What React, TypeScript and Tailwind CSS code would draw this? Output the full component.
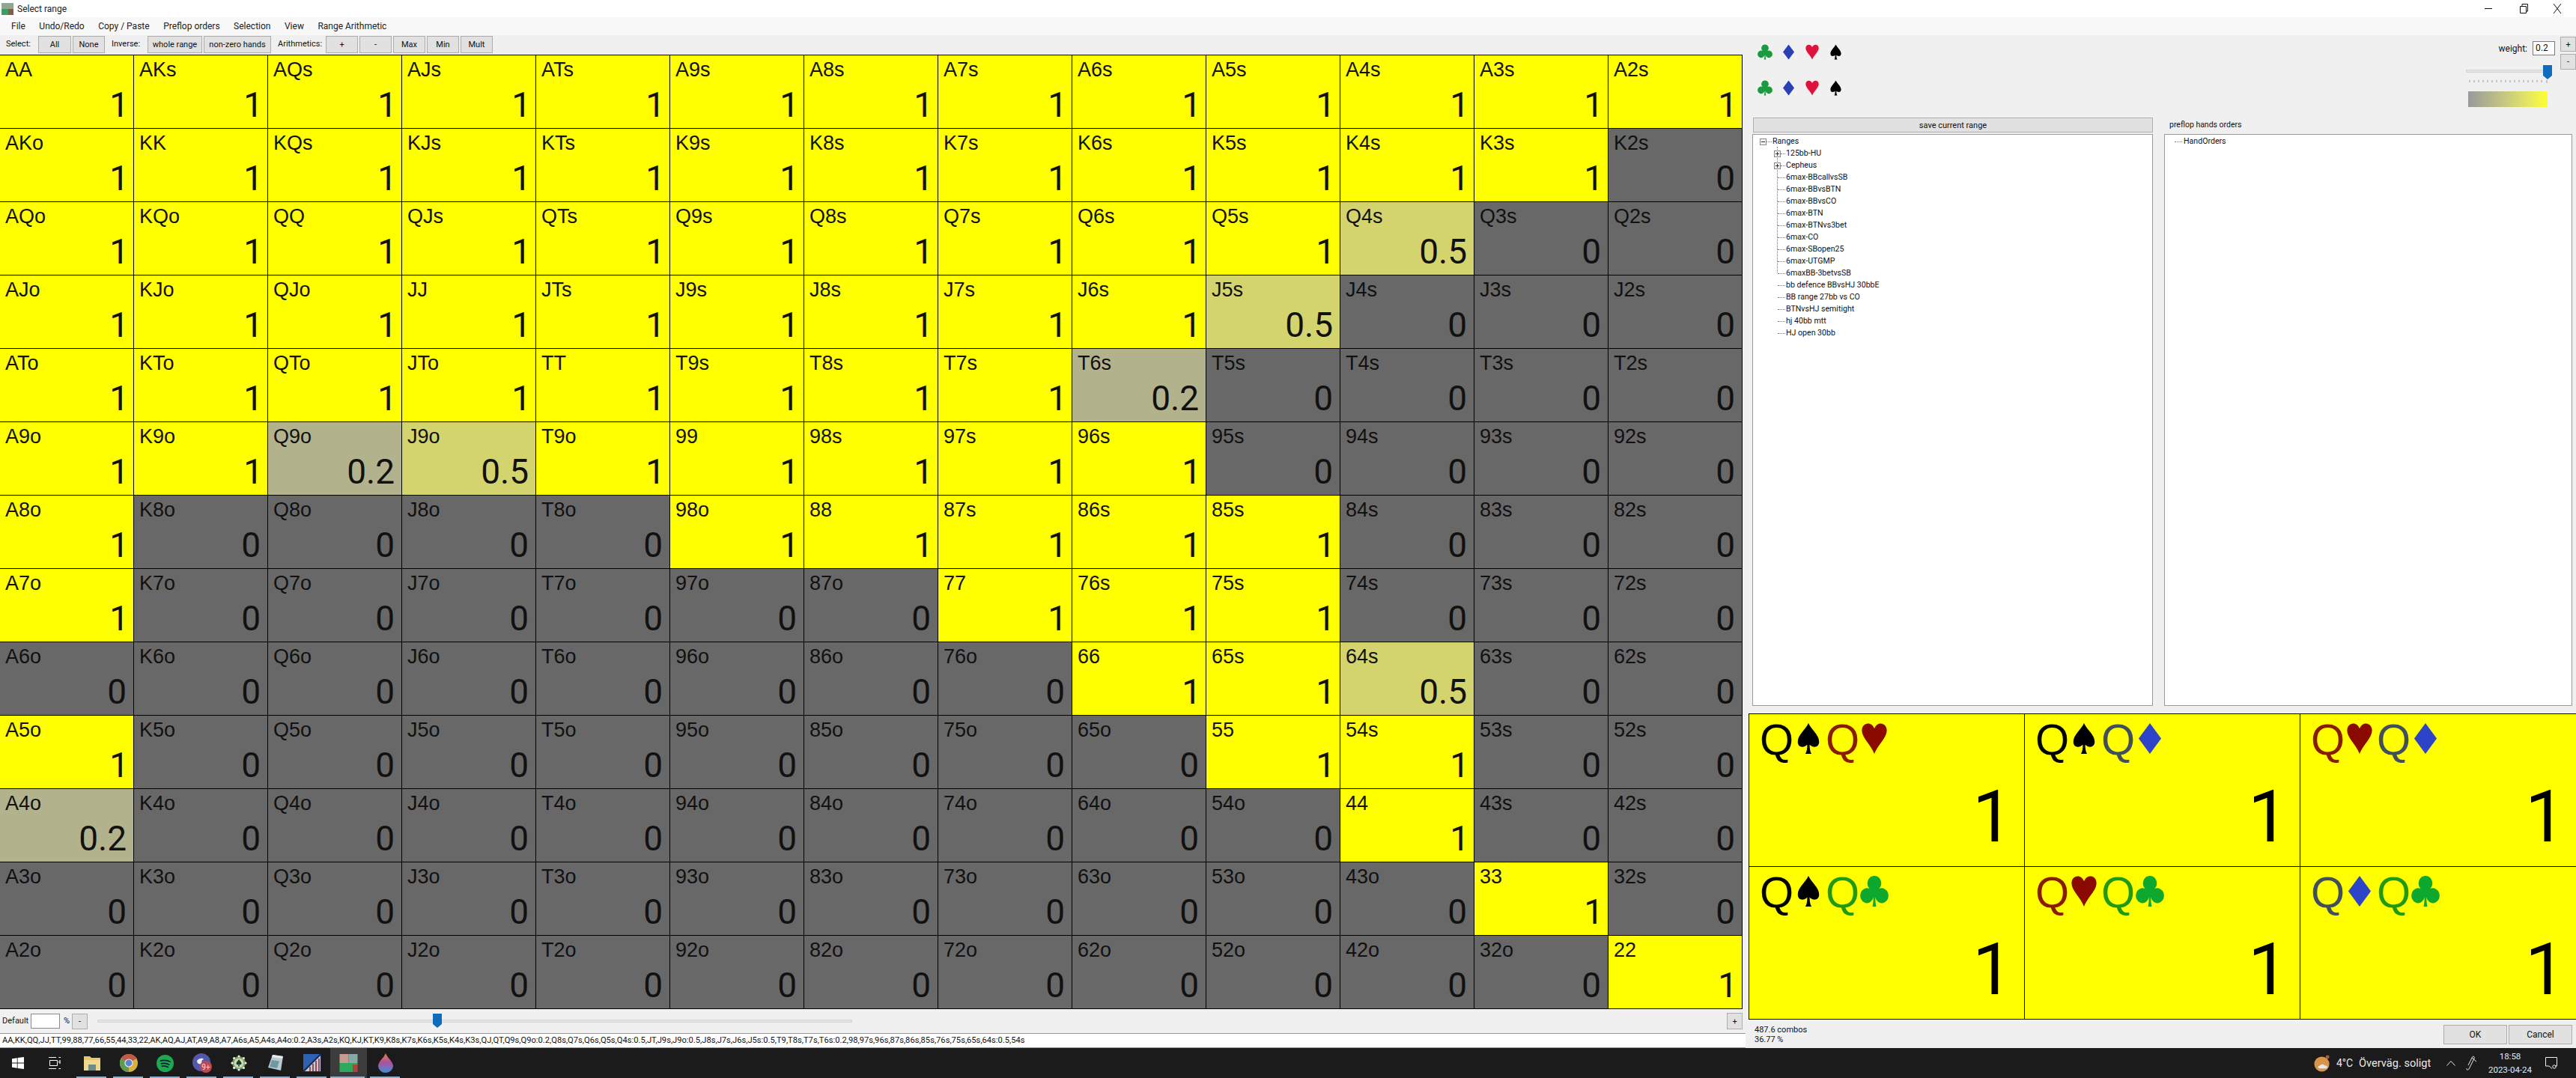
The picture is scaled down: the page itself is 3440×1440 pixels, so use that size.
import React from "react";

const ranks = "AKQJT98765432".split("");
const values = [
  "1111111111111",
  "1111111111110",
  "1111111111b00",
  "111111111b000",
  "11111111a0000",
  "11ab111110000",
  "1000011111000",
  "1000000111000",
  "0000000011b00",
  "1000000001100",
  "a000000000100",
  "0000000000010",
  "0000000000001",
];
const cellStyle: Record<string, { bg: string; text: string; pad: string }> = {
  "1": { bg: "bg-[#ffff00]", text: "1", pad: "pr-[6px]" },
  "0": { bg: "bg-[#686868]", text: "0", pad: "pr-[9px]" },
  a: { bg: "bg-[#b2b28c]", text: "0.2", pad: "pr-[9px]" },
  b: { bg: "bg-[#d4d46e]", text: "0.5", pad: "pr-[9px]" },
};

const SANS = "font-['Liberation_Sans',Arial,sans-serif]";

type Suit = "s" | "h" | "d" | "c";
function SuitIcon({ suit, className }: { suit: Suit; className: string }) {
  return (
    <svg viewBox="0 0 24 24" preserveAspectRatio="none" className={className} fill="currentColor">
      {suit === "s" && (
        <path d="M12 0.5C9.5 5.5 3 9 3 14.5C3 18.2 7.4 19.6 11 16.6C11 19.5 10.6 22 9.4 23.5L14.6 23.5C13.4 22 13 19.5 13 16.6C16.6 19.6 21 18.2 21 14.5C21 9 14.5 5.5 12 0.5Z" />
      )}
      {suit === "h" && (
        <path d="M12 23.5C9 16.5 1.5 11.5 1.5 6C1.5 2.8 3.9 0.8 6.6 0.8C9 0.8 11 2.3 12 4.6C13 2.3 15 0.8 17.4 0.8C20.1 0.8 22.5 2.8 22.5 6C22.5 11.5 15 16.5 12 23.5Z" />
      )}
      {suit === "d" && <path d="M12 0.5L21.5 12L12 23.5L2.5 12Z" />}
      {suit === "c" && (
        <path d="M12 0.5A5.6 5.6 0 0 1 16 10.2A5.6 5.6 0 1 1 12.8 16.5C12.9 19.4 13 21.5 13.6 23.5L10.4 23.5C11 21.5 11.1 19.4 11.2 16.5A5.6 5.6 0 1 1 8 10.2A5.6 5.6 0 0 1 12 0.5Z" />
      )}
    </svg>
  );
}

function SuitRow() {
  return (
    <div className="flex gap-[12px]">
      <SuitIcon suit="c" className="w-[20px] h-[21px] text-[#1c9a40]" />
      <SuitIcon suit="d" className="w-[19px] h-[21px] text-[#2a40b4]" />
      <SuitIcon suit="h" className="w-[20px] h-[21px] text-[#e2103c]" />
      <SuitIcon suit="s" className="w-[19px] h-[21px] text-black" />
    </div>
  );
}

function Btn({ children, className }: { children: React.ReactNode; className: string }) {
  return (
    <div
      className={
        "flex items-center justify-center bg-[#e1e1e1] border border-[#adadad] text-[11px] leading-none text-[#111] " +
        className
      }
    >
      {children}
    </div>
  );
}

function Cell({ i, j }: { i: number; j: number }) {
  const label = i === j ? ranks[i] + ranks[j] : i < j ? ranks[i] + ranks[j] + "s" : ranks[j] + ranks[i] + "o";
  const s = cellStyle[values[i][j]];
  return (
    <div className={"flex flex-col justify-between border-r border-b border-black text-[#111] " + s.bg}>
      <div className={"pl-[7px] pt-[6px] text-[27px] leading-[27px] " + SANS}>{label}</div>
      <div className={"pb-[8px] text-right text-[46px] leading-[46px] font-[Roboto,sans-serif] " + s.pad}>{s.text}</div>
    </div>
  );
}

function HandPart({ suit, tone }: { suit: Suit; tone: string }) {
  return (
    <>
      <span className={"w-[46px] text-[58px] leading-[58px] " + tone}>Q</span>
      <SuitIcon
        suit={suit}
        className={
          "w-[38px] h-[43px] mt-[6px] mr-[4px] " +
          (suit === "s"
            ? "text-black"
            : suit === "h"
              ? "text-[#8a0a00]"
              : suit === "d"
                ? "text-[#2c44c8]"
                : "text-[#0fa82e]")
        }
      />
    </>
  );
}

const toneOf: Record<Suit, string> = {
  s: "text-black",
  h: "text-[#8a1a00]",
  d: "text-[#3f4f5f]",
  c: "text-[#1f9a14]",
};

function HandCell({ a, b, right }: { a: Suit; b: Suit; right: boolean }) {
  return (
    <div className={"flex flex-col justify-between bg-[#ffff00] border-black border-b " + (right ? "border-r" : "")}>
      <div className={"flex items-start pl-[14px] pt-[5px] " + SANS}>
        <HandPart suit={a} tone={toneOf[a]} />
        <HandPart suit={b} tone={toneOf[b]} />
      </div>
      <div className="pr-[15px] pb-[18px] text-right text-[96px] leading-[96px] text-black font-[Roboto,sans-serif]">
        1
      </div>
    </div>
  );
}

const trees = [
  "6max-BBcallvsSB",
  "6max-BBvsBTN",
  "6max-BBvsCO",
  "6max-BTN",
  "6max-BTNvs3bet",
  "6max-CO",
  "6max-SBopen25",
  "6max-UTGMP",
  "6maxBB-3betvsSB",
  "bb defence BBvsHJ 30bbE",
  "BB range 27bb vs CO",
  "BTNvsHJ semitight",
  "hj 40bb mtt",
  "HJ open 30bb",
];

function Expander({ open }: { open: boolean }) {
  return (
    <svg viewBox="0 0 9 9" className="w-[9px] h-[9px] shrink-0">
      <rect x="0.5" y="0.5" width="8" height="8" fill="#f2f2f2" stroke="#8a8a8a" />
      <path d={open ? "M2 4.5H7" : "M2 4.5H7M4.5 2V7"} stroke="#333" fill="none" />
    </svg>
  );
}

function Slot({ children, active }: { children?: React.ReactNode; active?: boolean }) {
  return (
    <div className={"relative w-[49px] h-[40px] flex items-center justify-center " + (active ? "bg-[#3c3c3c]" : "")}>
      {children}
      <div
        className={
          "absolute bottom-0 h-[2px] bg-[#8fb0c8] " + (active ? "left-0 right-[3px]" : "left-[4px] right-[5px]")
        }
      />
    </div>
  );
}

function AppIcon({ className }: { className: string }) {
  return (
    <svg viewBox="0 0 24 24" className={className}>
      <rect x="0" y="0" width="12" height="12" fill="#c69a90" />
      <rect x="12" y="0" width="12" height="12" fill="#86a9a6" />
      <rect x="0" y="12" width="18" height="12" fill="#2fa95b" />
      <rect x="18" y="14" width="6" height="10" fill="#b5403c" />
      <rect x="12" y="12" width="12" height="2" fill="#2fa95b" />
    </svg>
  );
}

export default function App() {
  return (
    <div className="w-[3440px] h-[1440px] flex flex-col overflow-hidden bg-[#f0f0f0] text-[#111] font-[Roboto,sans-serif]">
      {/* title bar */}
      <div className="h-[23px] bg-white flex items-center shrink-0">
        <svg viewBox="0 0 16 16" className="ml-[2px] w-[16px] h-[16px]">
          <rect width="16" height="8" fill="#93a593" />
          <rect y="8" width="9" height="8" fill="#3d9c5e" />
          <rect x="9" y="8" width="7" height="8" fill="#8a5a48" />
        </svg>
        <span className="ml-[5px] text-[12px] leading-none text-[#222]">Select range</span>
        <div className="ml-auto mr-[2px] flex items-center text-[#111]">
          <svg viewBox="0 0 46 23" className="w-[46px] h-[23px]">
            <path d="M18 11.5H28" stroke="#111" fill="none" />
          </svg>
          <svg viewBox="0 0 46 23" className="w-[46px] h-[23px]">
            <path d="M19.5 8.5H27.5V17.5H19.5ZM22 8V5.5H29.5V15H28" stroke="#111" fill="none" />
          </svg>
          <svg viewBox="0 0 46 23" className="w-[46px] h-[23px]">
            <path d="M18 5L28 18M28 5L18 18" stroke="#111" fill="none" />
          </svg>
        </div>
      </div>

      {/* menu */}
      <div className="h-[24px] bg-[#f8f8f8] flex items-center shrink-0 pl-[15px] gap-[18.5px] text-[12px] leading-none text-[#222]">
        <span>File</span>
        <span>Undo/Redo</span>
        <span>Copy / Paste</span>
        <span>Preflop orders</span>
        <span>Selection</span>
        <span>View</span>
        <span>Range Arithmetic</span>
      </div>

      <div className="flex-1 flex min-h-0">
        {/* left column */}
        <div className="w-[2331px] shrink-0 flex flex-col">
          <div className="h-[26px] flex items-start pl-[8px] pt-[1px] text-[11px]">
            <span className="w-[43px] leading-[22px]">Select:</span>
            <Btn className="w-[44px] h-[23px]">All</Btn>
            <Btn className="w-[43px] h-[23px] ml-[2px]">None</Btn>
            <span className="w-[48px] ml-[9px] leading-[22px]">Inverse:</span>
            <Btn className="w-[73px] h-[23px]">whole range</Btn>
            <Btn className="w-[90px] h-[23px] ml-[2px]">non-zero hands</Btn>
            <span className="w-[64px] ml-[9px] leading-[22px]">Arithmetics:</span>
            <Btn className="w-[43px] h-[23px]">+</Btn>
            <Btn className="w-[43px] h-[23px] ml-[2px]">-</Btn>
            <Btn className="w-[43px] h-[23px] ml-[2px]">Max</Btn>
            <Btn className="w-[43px] h-[23px] ml-[2px]">Min</Btn>
            <Btn className="w-[43px] h-[23px] ml-[2px]">Mult</Btn>
          </div>

          <div className="w-[2327px] grid grid-cols-[repeat(13,179px)] grid-rows-[repeat(13,98px)] border-t border-black">
            {ranks.map((_, i) => ranks.map((_, j) => <Cell key={i + "-" + j} i={i} j={j} />))}
          </div>

          {/* slider row */}
          <div className="h-[32px] flex items-center pl-[3px] pr-[4px] text-[11px]">
            <span className="w-[38px]">Default</span>
            <div className="w-[39px] h-[20px] bg-white border border-[#8a8a8a]" />
            <span className="ml-[5px] w-[11px]">%</span>
            <Btn className="w-[21px] h-[21px]">-</Btn>
            <div className="relative ml-[13px] w-[1008px] h-[4px] bg-[#e4e4e4] border border-[#d4d4d4]">
              <svg viewBox="0 0 12 19" className="absolute left-[447px] -top-[9px] w-[12px] h-[19px]">
                <path d="M0 0H12V14L6 19L0 14Z" fill="#0f6cbd" />
              </svg>
            </div>
            <Btn className="ml-auto w-[21px] h-[22px]">+</Btn>
          </div>

          {/* range text */}
          <div className="h-[20px] bg-white border-y border-[#9a9a9a] pl-[3px] flex items-center text-[11.17px] leading-none whitespace-nowrap overflow-hidden">
            AA,KK,QQ,JJ,TT,99,88,77,66,55,44,33,22,AK,AQ,AJ,AT,A9,A8,A7,A6s,A5,A4s,A4o:0.2,A3s,A2s,KQ,KJ,KT,K9,K8s,K7s,K6s,K5s,K4s,K3s,QJ,QT,Q9s,Q9o:0.2,Q8s,Q7s,Q6s,Q5s,Q4s:0.5,JT,J9s,J9o:0.5,J8s,J7s,J6s,J5s:0.5,T9,T8s,T7s,T6s:0.2,98,97s,96s,87s,86s,85s,76s,75s,65s,64s:0.5,54s
          </div>
        </div>

        {/* right column */}
        <div className="flex-1 min-w-0 flex flex-col">
          <div className="h-[110px] flex shrink-0">
            <div className="pl-[16px] pt-[12px] flex flex-col gap-[27px]">
              <SuitRow />
              <SuitRow />
            </div>
            <div className="ml-auto w-[147px] flex flex-col">
              <div className="flex items-start">
                <div className="flex-1 flex items-center justify-end pt-[8px] gap-[7px]">
                  <span className="text-[12px] leading-none">weight:</span>
                  <div className="w-[30px] h-[19px] bg-white border border-[#7a7a7a] pl-[3px] text-[12px] leading-[17px]">
                    0.2
                  </div>
                </div>
                <div className="ml-[7px] pt-[2px] flex flex-col gap-[3px]">
                  <Btn className="w-[21px] h-[20px]">+</Btn>
                  <Btn className="w-[21px] h-[21px]">-</Btn>
                </div>
              </div>
              <div className="relative w-[112px] h-[4px] bg-[#e4e4e4] border border-[#d4d4d4]">
                <svg viewBox="0 0 12 19" className="absolute left-[102px] -top-[7px] w-[12px] h-[19px]">
                  <path d="M0 0H12V14L6 19L0 14Z" fill="#0f6cbd" />
                </svg>
              </div>
              <svg viewBox="0 0 110 4" className="ml-[4px] mt-[10px] w-[110px] h-[4px]">
                <path
                  d="M1 0V3M7 0V3M13 0V3M19 0V3M25 0V3M31 0V3M37 0V3M43 0V3M49 0V3M55 0V3M61 0V3M67 0V3M73 0V3M79 0V3M85 0V3M91 0V3M97 0V3M104 0V4"
                  stroke="#9a9a9a"
                  fill="none"
                />
              </svg>
              <div className="ml-[3px] mt-[11px] w-[106px] h-[21px] bg-linear-to-r from-[#999999] to-[#ffff28]" />
            </div>
          </div>

          <div className="flex-1 min-h-0 flex pl-[9px] pr-[5px] gap-[15px]">
            <div className="w-[535px] flex flex-col gap-[2px]">
              <Btn className="h-[20px] ml-[1px] text-[11.4px]">save current range</Btn>
              <div className="relative flex-1 bg-white border border-[#9a9a9a] pt-[1px] text-[10.6px] leading-[16px]">
                <div className="absolute left-[32px] top-[16px] h-[168px] border-l border-dotted border-[#777]" />
                <div className="h-[16px] flex items-center pl-[9px]">
                  <Expander open />
                  <span className="w-[7px] border-t border-dotted border-[#777] mr-[1px]" />
                  <span>Ranges</span>
                </div>
                {["125bb-HU", "Cepheus"].map((t) => (
                  <div key={t} className="relative h-[16px] flex items-center pl-[28px]">
                    <Expander open={false} />
                    <span className="w-[6px] border-t border-dotted border-[#777] mr-[1px]" />
                    <span>{t}</span>
                  </div>
                ))}
                {trees.map((t) => (
                  <div key={t} className="h-[16px] flex items-center pl-[33px]">
                    <span className="w-[10px] border-t border-dotted border-[#777] mr-[1px]" />
                    <span>{t}</span>
                  </div>
                ))}
              </div>
            </div>
            <div className="flex-1 flex flex-col gap-[2px]">
              <div className="h-[20px] pl-[7px] flex items-center text-[10.5px] leading-none">preflop hands orders</div>
              <div className="flex-1 bg-white border border-[#9a9a9a] pt-[1px] text-[10.6px] leading-[16px]">
                <div className="h-[16px] flex items-center pl-[13px]">
                  <span className="w-[10px] border-t border-dotted border-[#777] mr-[2px]" />
                  <span>HandOrders</span>
                </div>
              </div>
            </div>
          </div>

          {/* hand combos */}
          <div className="mt-[10px] ml-[4px] grid grid-cols-[368px_368px_369px] grid-rows-[204px_204px] border-t border-l border-black shrink-0">
            <HandCell a="s" b="h" right />
            <HandCell a="s" b="d" right />
            <HandCell a="h" b="d" right={false} />
            <HandCell a="s" b="c" right />
            <HandCell a="h" b="c" right />
            <HandCell a="d" b="c" right={false} />
          </div>

          {/* footer */}
          <div className="h-[38px] shrink-0 flex pl-[12px] pr-[5px] pt-[7px]">
            <div className="flex flex-col text-[11px] leading-[13px]">
              <span>487.6 combos</span>
              <span>36.77 %</span>
            </div>
            <div className="ml-auto flex gap-[2px]">
              <Btn className="w-[85px] h-[26px] text-[12px]">OK</Btn>
              <Btn className="w-[85px] h-[26px] text-[12px]">Cancel</Btn>
            </div>
          </div>
        </div>
      </div>

      {/* taskbar */}
      <div className="h-[40px] shrink-0 bg-[#1b1b1b] flex items-center text-[#e8e8e8]">
        <div className="w-[48px] flex justify-center">
          <svg viewBox="0 0 16 16" className="w-[16px] h-[16px]" fill="#fff">
            <path d="M0 2.2L6.8 1.2V7.6H0ZM7.6 1.1L16 0V7.6H7.6ZM0 8.4H6.8V14.8L0 13.8ZM7.6 8.4H16V16L7.6 14.9Z" />
          </svg>
        </div>
        <div className="w-[50px] flex justify-center">
          <svg viewBox="0 0 16 16" className="w-[16px] h-[16px]" fill="none" stroke="#fff">
            <path d="M0 0.5H10M0 15.5H10M1.5 4.5H11.5V11.5H1.5ZM13.5 0.5H16M13.5 15.5H16M14 5H16V8H14Z" />
          </svg>
        </div>
        <Slot>
          <svg viewBox="0 0 22 22" className="w-[22px] h-[22px]">
            <path d="M0 2H8L10 4H22V21H0Z" fill="#e6c66e" />
            <rect x="0" y="7" width="22" height="14" fill="#f0d98a" />
            <rect x="6" y="13" width="10" height="8" fill="#6f8a8a" />
          </svg>
        </Slot>
        <Slot>
          <svg viewBox="0 0 24 24" className="w-[24px] h-[24px]">
            <circle cx="12" cy="12" r="12" fill="#d9b23a" />
            <path d="M12 12L1.6 6A12 12 0 0 1 22.4 6Z" fill="#bf5a4a" />
            <path d="M12 12L1.6 6A12 12 0 0 0 12 24Z" fill="#5f9a54" />
            <circle cx="12" cy="12" r="5.6" fill="#e8e8e8" />
            <circle cx="12" cy="12" r="4.4" fill="#5a86d0" />
          </svg>
        </Slot>
        <Slot>
          <svg viewBox="0 0 24 24" className="w-[23px] h-[23px]">
            <circle cx="12" cy="12" r="12" fill="#1ea84f" />
            <path d="M5 8.5C10 7 15 7.5 19.5 10M6 12.5C10 11.3 14.5 11.8 18 14M7 16C10 15.2 13.5 15.6 16.5 17.5" stroke="#123" strokeWidth="1.8" fill="none" />
          </svg>
        </Slot>
        <Slot>
          <svg viewBox="0 0 26 26" className="w-[26px] h-[26px]">
            <circle cx="12" cy="12" r="12" fill="#5458a8" />
            <path d="M6 10C9 6 14 6 15 8C12 9 12 11 13 13C10 16 6 14 6 10Z" fill="#f0f0f5" />
            <circle cx="18" cy="18" r="8" fill="#b84a55" />
            <text x="18" y="21.5" textAnchor="middle" fontSize="10" fill="#f5dcdc">9+</text>
          </svg>
        </Slot>
        <Slot>
          <svg viewBox="0 0 22 22" className="w-[22px] h-[22px]">
            <circle cx="11" cy="11" r="9" fill="#6d9a5a" />
            <circle cx="11" cy="11" r="6.6" fill="#c8d8b8" />
            <circle cx="11" cy="2" r="1.6" fill="#f0f0e0" />
            <circle cx="11" cy="20" r="1.6" fill="#f0f0e0" />
            <circle cx="2" cy="11" r="1.6" fill="#f0f0e0" />
            <circle cx="20" cy="11" r="1.6" fill="#f0f0e0" />
            <circle cx="4.6" cy="4.6" r="1.6" fill="#f0f0e0" />
            <circle cx="17.4" cy="4.6" r="1.6" fill="#f0f0e0" />
            <circle cx="4.6" cy="17.4" r="1.6" fill="#f0f0e0" />
            <circle cx="17.4" cy="17.4" r="1.6" fill="#f0f0e0" />
            <path d="M11 6C9.5 8.5 7.5 9.5 7.5 11.5C7.5 13.3 9.5 13.6 10.5 12.8L10 15.5H12L11.5 12.8C12.5 13.6 14.5 13.3 14.5 11.5C14.5 9.5 12.5 8.5 11 6Z" fill="#1d3a26" />
          </svg>
        </Slot>
        <Slot>
          <svg viewBox="0 0 22 24" className="w-[22px] h-[24px]">
            <path d="M7 1L21 3L18 22L1 18Z" fill="#b9c9cf" />
            <path d="M7 1L21 3L20 6L6 4Z" fill="#e4e9ea" />
            <path d="M6 8L16 9.5L13 19L3 17Z" fill="#6f9aa2" />
          </svg>
        </Slot>
        <Slot>
          <svg viewBox="0 0 24 24" className="w-[24px] h-[24px]">
            <rect width="24" height="24" fill="#1a2a55" />
            <path d="M0 0H22L0 22Z" fill="#2f62b5" />
            <path d="M2 23L23 2V23Z" fill="#c8c8d0" />
            <path d="M9 23V17M13 23V13M17 23V9M21 23V6" stroke="#8a3040" strokeWidth="1.6" />
          </svg>
        </Slot>
        <Slot active>
          <AppIcon className="w-[25px] h-[24px]" />
        </Slot>
        <Slot>
          <svg viewBox="0 0 20 26" className="w-[20px] h-[26px]">
            <defs>
              <linearGradient id="dropG" x1="0" y1="0" x2="0" y2="1">
                <stop offset="0" stopColor="#e0884a" />
                <stop offset="0.45" stopColor="#b0509a" />
                <stop offset="1" stopColor="#3f8fd8" />
              </linearGradient>
            </defs>
            <path d="M10 0C12 6 20 11 20 17A10 9 0 0 1 0 17C0 11 8 6 10 0Z" fill="url(#dropG)" />
          </svg>
        </Slot>

        <div className="ml-auto flex items-center h-[40px]">
          <svg viewBox="0 0 24 24" className="w-[23px] h-[23px] mr-[7px]">
            <circle cx="11" cy="13" r="10.5" fill="#d9934a" />
            <circle cx="19" cy="3" r="2.6" fill="#a85a3c" />
            <path d="M8 19C5 19 5 15.5 8 15.5C9 12.5 14 12.5 15 15C19 14.5 20 19 17 19Z" fill="#e8e8ea" />
          </svg>
          <span className="text-[14px] leading-none w-[30px] whitespace-nowrap">4°C</span>
          <span className="text-[14.6px] leading-none w-[117px] whitespace-nowrap">Överväg. soligt</span>
          <svg viewBox="0 0 12 8" className="w-[12px] h-[8px] mr-[14px]" fill="none" stroke="#e8e8e8">
            <path d="M0.5 7.5L6 1.5L11.5 7.5" />
          </svg>
          <svg viewBox="0 0 16 20" className="w-[16px] h-[20px] mr-[14px]" fill="none" stroke="#e8e8e8">
            <path d="M1 17C0 19 3 20 4 18L11 4C12 1 9 0 8 3L3 13M8 3L14 8" />
          </svg>
          <div className="w-[58px] flex flex-col items-center text-[11.5px] leading-[18px] whitespace-nowrap">
            <span>18:58</span>
            <span>2023-04-24</span>
          </div>
          <svg viewBox="0 0 16 16" className="ml-[18px] mr-[25px] w-[16px] h-[16px]" fill="none" stroke="#f0f0f0">
            <path d="M0.5 0.5H15.5V12H13M0.5 0.5V12H5L9 15.5" />
            <circle cx="12" cy="13" r="2.2" />
          </svg>
        </div>
      </div>
    </div>
  );
}
